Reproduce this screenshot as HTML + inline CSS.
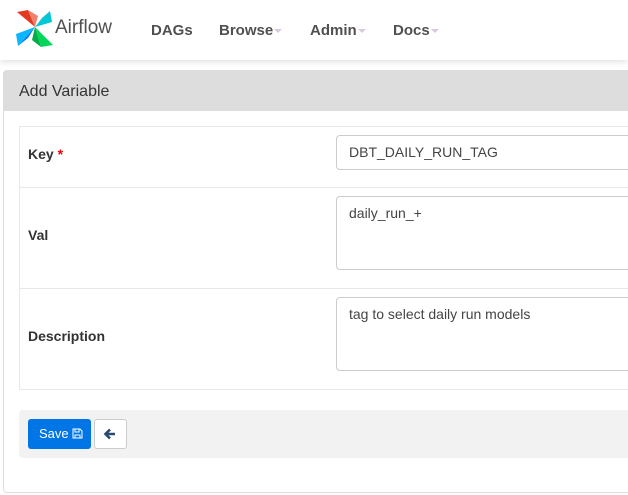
<!DOCTYPE html>
<html><head><style>
*{box-sizing:border-box}
body{margin:0;width:628px;height:495px;overflow:hidden;background:#fff;font-family:"Liberation Sans",Arial,sans-serif;color:#333}
.nav{position:absolute;left:0;top:0;width:628px;height:60px;background:#fff;box-shadow:0 2px 6px rgba(0,0,0,.12)}
.brand{position:absolute;left:55px;top:17px;font-size:19px;color:#51504f}
.nl{position:absolute;top:22px;font-size:15px;font-weight:bold;color:#51504f}
.car{display:inline-block;border-top:4px solid #d8cbe0;border-left:4px solid transparent;border-right:4px solid transparent;vertical-align:middle;margin-left:1px}
.panel{position:absolute;left:3px;top:70px;width:640px;height:423px;border:1px solid #ddd;border-radius:4px}
.ph{height:40px;background:#ddd;padding:12px 15px;font-size:16px}
table{position:absolute;left:15px;top:55px;width:640px;border-collapse:collapse;border:1px solid #e8e8e8}
td{border-top:1px solid #e8e8e8;border-bottom:1px solid #e8e8e8;font-size:14px;font-weight:bold;padding:0 8px 6px;position:relative}
.inp{position:absolute;left:316px;width:320px;border:1px solid #ccc;border-radius:4px;font-weight:normal;font-size:14px;padding:8px 12px;color:#444}
.bar{position:absolute;left:15px;top:339px;width:640px;height:48px;background:#f2f2f2;border-radius:4px}
.save{position:absolute;left:9px;top:9px;width:63px;height:30px;background:#0075e5;border-radius:3px;color:#fff;font-size:13px;padding:7px 0 0 11px}
.back{position:absolute;left:75px;top:9px;width:33px;height:30px;background:#fff;border:1px solid #ccc;border-radius:3px}
</style></head><body>
<div class="nav">
<svg style="position:absolute;left:16px;top:10px" width="38" height="37" viewBox="0 0 38 37">
<polygon points="1,2 12,0 19,17" fill="#e43921"/>
<polygon points="12,0 22,6 19,17" fill="#f1806c"/>
<polygon points="34,1 36,12 19,17" fill="#00c7d4"/>
<polygon points="34,1 26,8 19,17" fill="#11b2c8"/>
<polygon points="37,35 25,37 19,17" fill="#04d659"/>
<polygon points="25,37 16,30 19,17" fill="#00ad46"/>
<polygon points="2,36 0,24 19,17" fill="#0cb6ff"/>
<polygon points="2,36 12,28 19,17" fill="#017cee"/>
</svg>
<div class="brand">Airflow</div>
<div class="nl" style="left:151px">DAGs</div>
<div class="nl" style="left:219px">Browse<span class="car"></span></div>
<div class="nl" style="left:310px">Admin<span class="car"></span></div>
<div class="nl" style="left:393px">Docs<span class="car"></span></div>
</div>
<div class="panel">
<div class="ph">Add Variable</div>
<table>
<tr style="height:61px"><td style="width:316px">Key <span style="color:#e00">*</span><div class="inp" style="top:8px;height:35px">DBT_DAILY_RUN_TAG</div></td><td></td></tr>
<tr style="height:101px"><td>Val<div class="inp" style="top:8px;height:74px">daily_run_+</div></td><td></td></tr>
<tr style="height:101px"><td>Description<div class="inp" style="top:8px;height:74px">tag to select daily run models</div></td><td></td></tr>
</table>
<div class="bar">
<div class="save">Save <svg width="11" height="11" viewBox="0 0 11 11" style="vertical-align:-1px"><path d="M1 1h7l2 2v7H1z M3 1v3h4V1 M3 10V7h5v3" fill="none" stroke="#fff" stroke-width="1"/></svg></div>
<div class="back"><svg width="31" height="28" viewBox="0 0 31 28"><path d="M20 14H11M15 9.5L10.5 14L15 18.5" fill="none" stroke="#2c4a6b" stroke-width="2.6"/></svg></div>
</div>
</div>
</body></html>
